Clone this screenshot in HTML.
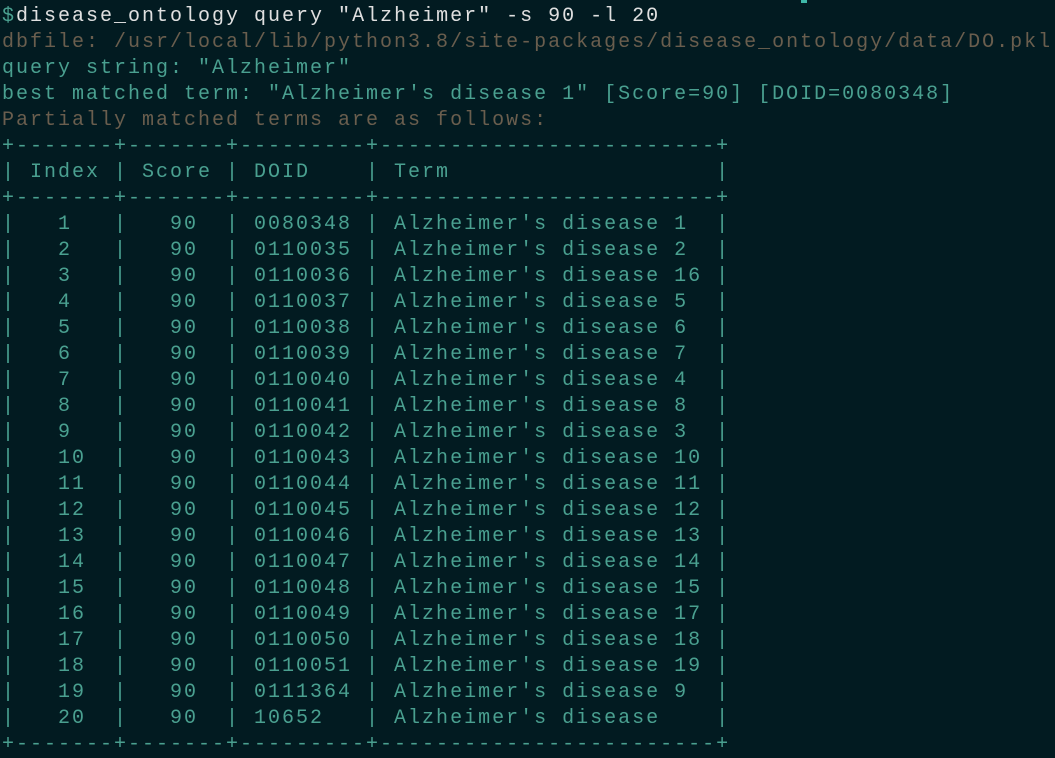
<!DOCTYPE html>
<html><head><meta charset="utf-8"><style>
html,body{margin:0;padding:0;background:#021b21;width:1055px;height:756px;overflow:hidden}
pre{margin:0;position:absolute;left:2px;top:4px;font-family:"Liberation Mono",monospace;font-size:20px;letter-spacing:2.0px;line-height:26px;color:#4aa090}
.w{color:#e0e0e0}.b{color:#6a5e4e}
.cur{position:absolute;left:801px;top:0;width:6px;height:3px;background:#3fb8a8}
</style></head><body>
<div class="cur"></div>
<pre><span>$</span><span class="w">disease_ontology query "Alzheimer" -s 90 -l 20</span>
<span class="b">dbfile: /usr/local/lib/python3.8/site-packages/disease_ontology/data/DO.pkl</span>
query string: "Alzheimer"
best matched term: "Alzheimer's disease 1" [Score=90] [DOID=0080348]
<span class="b">Partially matched terms are as follows:</span>
+-------+-------+---------+------------------------+
| Index | Score | DOID    | Term                   |
+-------+-------+---------+------------------------+
|   1   |   90  | 0080348 | Alzheimer's disease 1  |
|   2   |   90  | 0110035 | Alzheimer's disease 2  |
|   3   |   90  | 0110036 | Alzheimer's disease 16 |
|   4   |   90  | 0110037 | Alzheimer's disease 5  |
|   5   |   90  | 0110038 | Alzheimer's disease 6  |
|   6   |   90  | 0110039 | Alzheimer's disease 7  |
|   7   |   90  | 0110040 | Alzheimer's disease 4  |
|   8   |   90  | 0110041 | Alzheimer's disease 8  |
|   9   |   90  | 0110042 | Alzheimer's disease 3  |
|   10  |   90  | 0110043 | Alzheimer's disease 10 |
|   11  |   90  | 0110044 | Alzheimer's disease 11 |
|   12  |   90  | 0110045 | Alzheimer's disease 12 |
|   13  |   90  | 0110046 | Alzheimer's disease 13 |
|   14  |   90  | 0110047 | Alzheimer's disease 14 |
|   15  |   90  | 0110048 | Alzheimer's disease 15 |
|   16  |   90  | 0110049 | Alzheimer's disease 17 |
|   17  |   90  | 0110050 | Alzheimer's disease 18 |
|   18  |   90  | 0110051 | Alzheimer's disease 19 |
|   19  |   90  | 0111364 | Alzheimer's disease 9  |
|   20  |   90  | 10652   | Alzheimer's disease    |
+-------+-------+---------+------------------------+</pre>
</body></html>
